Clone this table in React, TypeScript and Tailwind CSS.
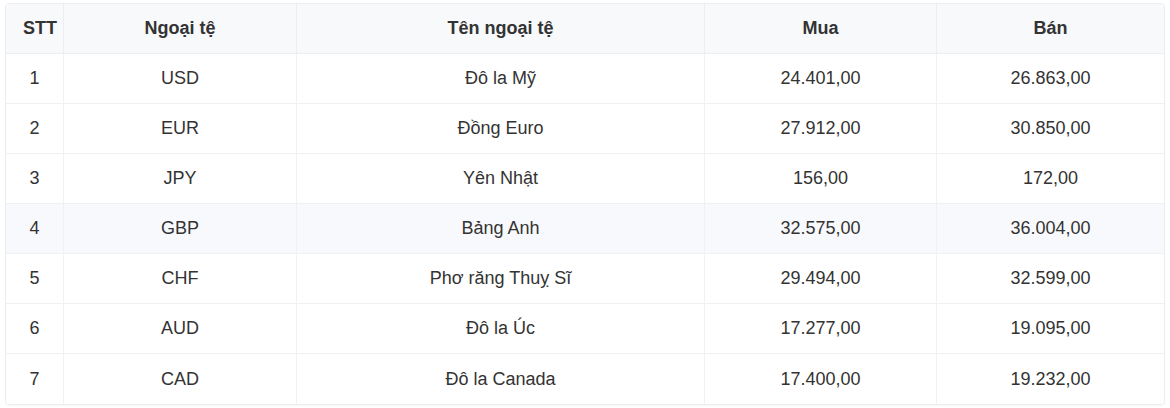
const rates = [
  { code: "USD", name: "Đô la Mỹ", buy: "24.401,00", sell: "26.863,00" },
  { code: "EUR", name: "Đồng Euro", buy: "27.912,00", sell: "30.850,00" },
  { code: "JPY", name: "Yên Nhật", buy: "156,00", sell: "172,00" },
  { code: "GBP", name: "Bảng Anh", buy: "32.575,00", sell: "36.004,00" },
  { code: "CHF", name: "Phơ răng Thuỵ Sĩ", buy: "29.494,00", sell: "32.599,00" },
  { code: "AUD", name: "Đô la Úc", buy: "17.277,00", sell: "19.095,00" },
  { code: "CAD", name: "Đô la Canada", buy: "17.400,00", sell: "19.232,00" },
];

const headers = ["STT", "Ngoại tệ", "Tên ngoại tệ", "Mua", "Bán"];

export default function App() {
  return (
    <div
      className="bg-white w-[1170px] h-[408px] pt-[3px] pl-[5px]"
      style={{ fontFamily: '"Liberation Sans", Arial, sans-serif' }}
    >
      <div className="w-[1160px] border border-[#eceef2] rounded-[4px] overflow-hidden shadow-[0_1px_2px_rgba(0,0,0,0.04)]">
        <table className="w-full border-separate border-spacing-0 text-[18px] text-[#333]">
          <colgroup>
            <col className="w-[58px]" />
            <col className="w-[233px]" />
            <col className="w-[408px]" />
            <col className="w-[232px]" />
            <col />
          </colgroup>
          <thead>
            <tr className="bg-[#f8f9fb]">
              {headers.map((h, i) => (
                <th
                  key={h}
                  className={`h-[50px] p-0 font-bold text-center border-b border-[#eceef2] ${
                    i < headers.length - 1 ? "border-r" : ""
                  } ${i === 0 ? "pl-[11px]" : ""}`}
                >
                  {h}
                </th>
              ))}
            </tr>
          </thead>
          <tbody>
            {rates.map((r, idx) => {
              const cells = [String(idx + 1), r.code, r.name, r.buy, r.sell];
              const last = idx === rates.length - 1;
              return (
                <tr key={r.code} className={idx === 3 ? "bg-[#f8f9fc]" : "bg-white"}>
                  {cells.map((c, i) => (
                    <td
                      key={i}
                      className={`h-[50px] p-0 text-center border-[#f0f1f4] ${
                        last ? "" : "border-b"
                      } ${i < cells.length - 1 ? "border-r" : ""}`}
                    >
                      {c}
                    </td>
                  ))}
                </tr>
              );
            })}
          </tbody>
        </table>
      </div>
    </div>
  );
}
